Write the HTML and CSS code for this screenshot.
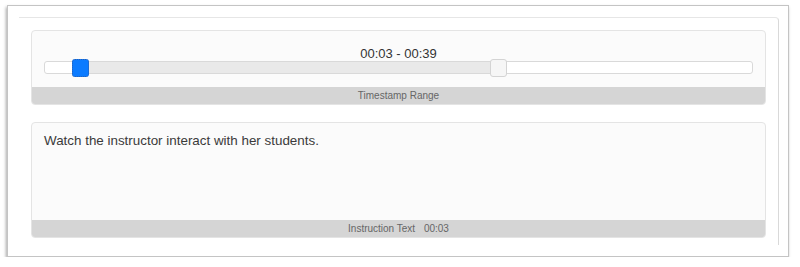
FILE: index.html
```html
<!DOCTYPE html>
<html lang="en">

<head>
  <meta charset="UTF-8">
  <title>Timestamp Instruction</title>
  <link rel="stylesheet" href="styles.css">
</head>

<body>

<div class="frame">
  <div class="panel">

    <div class="card">
      <div class="card-body range-body">
        <p class="range-label">00:03 - 00:39</p>
        <div class="range-track">
          <div class="range-fill"></div>
          <span class="range-handle handle-start"></span>
          <span class="range-handle handle-end"></span>
        </div>
      </div>
      <div class="card-footer">Timestamp Range</div>
    </div>

    <div class="card">
      <div class="card-body text-body">
        <p class="instruction">Watch the instructor interact with her students.</p>
      </div>
      <div class="card-footer">Instruction Text <span class="footer-time">00:03</span></div>
    </div>

  </div>
</div>

</body>
</html>
```

FILE: styles.css
```css
* {
  margin: 0;
  padding: 0;
  box-sizing: border-box;
}

body {
  background-color: #fff;
  font-family: 'Liberation Sans', Arial, sans-serif;
  color: #333;
}

.frame {
  width: 782px;
  height: 252px;
  margin: 5px 0 0 7px;
  padding: 11px 9px 0 11px;
  background-color: #fff;
  border: 1px solid #c4c4c4;
  box-shadow: -1px 2px 3px rgba(0, 0, 0, 0.35);
}

.panel {
  height: 228px;
  padding: 12px 12px 0 12px;
  border-top: 1px solid #e6e6e6;
  border-right: 1px solid #d9d9d9;
  border-top-right-radius: 4px;
}

.card {
  background-color: #fbfbfb;
  border: 1px solid #e4e4e4;
  border-radius: 4px;
  overflow: hidden;
}

.card + .card {
  margin-top: 17px;
}

.card-body {
  padding: 0 12px;
}

.range-body {
  height: 56px;
  padding-top: 16px;
}

.range-label {
  font-size: 13px;
  line-height: 14px;
  text-align: center;
  color: #333;
}

.range-track {
  position: relative;
  height: 13px;
  background-color: #fff;
  border: 1px solid #d9d9d9;
  border-radius: 3px;
}

.range-fill {
  position: absolute;
  top: 0;
  bottom: 0;
  left: 36px;
  width: 418px;
  background-color: #e9e9e9;
}

.range-handle {
  position: absolute;
  top: -3px;
  width: 17px;
  height: 18px;
  border-radius: 3px;
}

.handle-start {
  left: 27px;
  background-color: #0b7bff;
  border: 1px dotted #2a5fb0;
}

.handle-end {
  left: 445px;
  background-color: #f6f6f6;
  border: 1px solid #d4d4d4;
}

.text-body {
  height: 97px;
  padding-top: 10px;
}

.instruction {
  font-size: 13.4px;
  line-height: 16px;
  color: #3a3a3a;
}

.card-footer {
  height: 17px;
  background-color: #d5d5d5;
  font-size: 10px;
  line-height: 17px;
  text-align: center;
  color: #666;
}

.footer-time {
  margin-left: 6px;
}
```
